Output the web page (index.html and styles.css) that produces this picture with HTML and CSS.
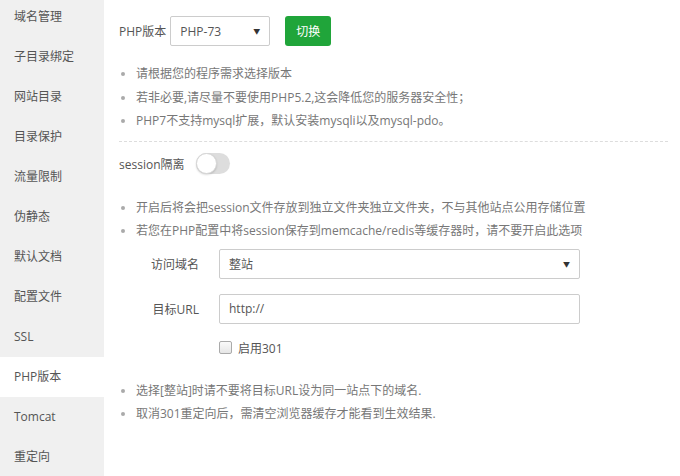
FILE: index.html
```html
<!DOCTYPE html>
<html lang="zh-CN">
<head>
<meta charset="utf-8">
<title>PHP版本</title>
<link rel="stylesheet" href="styles.css">
</head>
<body>
<div class="page">
  <ul class="side">
    <li>域名管理</li>
    <li>子目录绑定</li>
    <li>网站目录</li>
    <li>目录保护</li>
    <li>流量限制</li>
    <li>伪静态</li>
    <li>默认文档</li>
    <li>配置文件</li>
    <li>SSL</li>
    <li class="active">PHP版本</li>
    <li>Tomcat</li>
    <li>重定向</li>
  </ul>
  <div class="main">
    <div class="ver-row">
      <span class="ver-label">PHP版本</span>
      <div class="select ver-select"><span>PHP-73</span><span class="arrow">▼</span></div>
      <button class="btn">切换</button>
    </div>
    <ul class="tips tips-1">
      <li>请根据您的程序需求选择版本</li>
      <li>若非必要,请尽量不要使用PHP5.2,这会降低您的服务器安全性；</li>
      <li>PHP7不支持mysql扩展，默认安装mysqli以及mysql-pdo。</li>
    </ul>
    <div class="divider"></div>
    <div class="session-row">
      <span>session隔离</span>
      <span class="toggle"><span class="knob"></span></span>
    </div>
    <ul class="tips tips-2">
      <li>开启后将会把session文件存放到独立文件夹独立文件夹，不与其他站点公用存储位置</li>
      <li>若您在PHP配置中将session保存到memcache/redis等缓存器时，请不要开启此选项</li>
    </ul>
    <div class="form">
      <div class="form-row">
        <span class="form-label">访问域名</span>
        <div class="select wide"><span>整站</span><span class="arrow">▼</span></div>
      </div>
      <div class="form-row">
        <span class="form-label">目标URL</span>
        <div class="input wide">http://</div>
      </div>
      <div class="check-row">
        <span class="checkbox"></span>
        <span>启用301</span>
      </div>
    </div>
    <ul class="tips tips-3">
      <li>选择[整站]时请不要将目标URL设为同一站点下的域名.</li>
      <li>取消301重定向后，需清空浏览器缓存才能看到生效结果.</li>
    </ul>
  </div>
</div>
</body>
</html>
```
FILE: styles.css
```css
html, body {
  margin: 0;
  padding: 0;
  background: #fff;
}
body {
  font-family: "Open Sans", "Noto Sans CJK SC", sans-serif;
  font-size: 12px;
  color: #555;
}
.page {
  display: flex;
  width: 680px;
  height: 476px;
  overflow: hidden;
}
.side {
  list-style: none;
  margin: -3px 0 0 0;
  padding: 0;
  width: 104px;
  flex: none;
  background: #f0f0f0;
  height: 479px;
}
.side li {
  height: 40px;
  line-height: 40px;
  padding-left: 14px;
  color: #555;
}
.side li.active {
  background: #fff;
}
.main {
  flex: 1;
  padding: 16px 12px 0 15px;
}
.ver-row {
  display: flex;
  align-items: center;
  height: 30px;
}
.ver-label {
  margin-right: 4px;
}
.select, .input {
  box-sizing: border-box;
  height: 30px;
  border: 1px solid #ccc;
  border-radius: 2px;
  display: flex;
  align-items: center;
  justify-content: space-between;
  padding: 0 9px 0 9px;
  color: #555;
  background: #fff;
}
.ver-select {
  width: 100px;
}
.arrow {
  font-size: 7px;
  color: #333;
}
.btn {
  margin-left: 15px;
  width: 46px;
  height: 30px;
  border: none;
  border-radius: 3px;
  background: #20a53a;
  color: #fff;
  font-family: inherit;
  font-size: 12px;
  padding: 0;
}
.tips {
  list-style: none;
  margin: 0;
  padding: 0;
  color: #777;
}
.tips li {
  line-height: 23.5px;
  padding-left: 17px;
  position: relative;
}
.tips li::before {
  content: "";
  position: absolute;
  left: 2px;
  top: 10px;
  width: 4px;
  height: 4px;
  border-radius: 50%;
  background: #aaa;
}
.tips-1 {
  margin-top: 16px;
}
.divider {
  margin-top: 8px;
  border-top: 1px dashed #ddd;
}
.session-row {
  display: flex;
  align-items: center;
  height: 22px;
  margin-top: 11px;
}
.toggle {
  margin-left: 11px;
  width: 34px;
  height: 21px;
  border-radius: 11px;
  background: #ddd;
  position: relative;
  box-sizing: border-box;
}
.knob {
  position: absolute;
  left: 0;
  top: 0;
  width: 21px;
  height: 21px;
  box-sizing: border-box;
  border-radius: 50%;
  background: #fff;
  border: 1px solid #d6d6d6;
  box-shadow: 0 1px 2px rgba(0,0,0,0.15);
}
.tips-2 {
  margin-top: 21px;
}
.form {
  margin-top: 6px;
}
.form-row {
  display: flex;
  align-items: center;
  margin-bottom: 15px;
}
.form-label {
  width: 100px;
  padding-right: 20px;
  text-align: right;
  box-sizing: border-box;
  flex: none;
}
.wide {
  width: 361px;
}
.input {
  justify-content: flex-start;
}
.check-row {
  display: flex;
  align-items: center;
  padding-left: 100px;
  height: 18px;
}
.checkbox {
  width: 11px;
  height: 11px;
  border: 1px solid #aaa;
  border-radius: 2px;
  background: linear-gradient(#fafafa, #e6e6e6);
  margin-right: 6px;
}
.tips-3 {
  margin-top: 22px;
}
```
